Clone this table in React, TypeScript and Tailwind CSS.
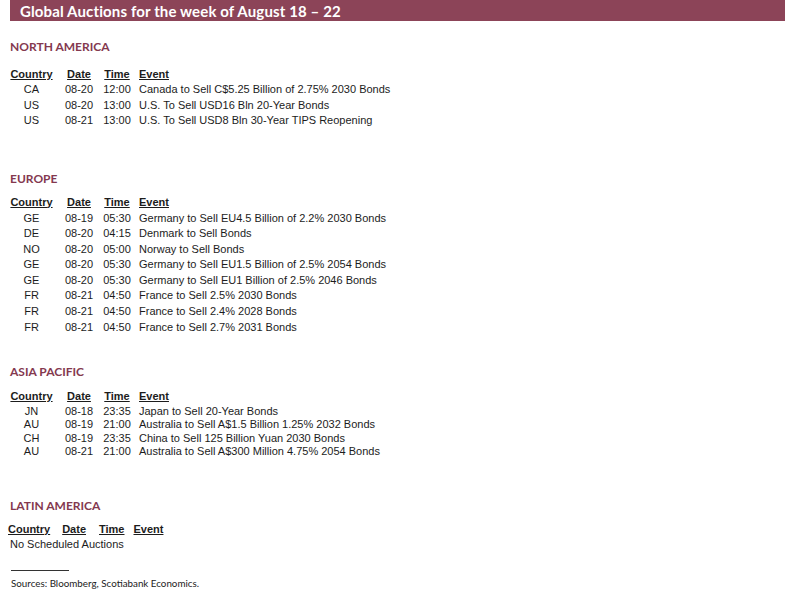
import React from "react";

type Row = [string, string, string, string];

interface Section {
  title: string;
  rows: Row[];
  mt: string;
  headerMt: string;
  rowsMt: string;
  leading: string;
}

const sections: Section[] = [
  {
    title: "NORTH AMERICA",
    mt: "mt-[18px]",
    headerMt: "mt-[11px]",
    rowsMt: "mt-0",
    leading: "leading-[15.5px]",
    rows: [
      ["CA", "08-20", "12:00", "Canada to Sell C$5.25 Billion of 2.75% 2030 Bonds"],
      ["US", "08-20", "13:00", "U.S. To Sell USD16 Bln 20-Year Bonds"],
      ["US", "08-21", "13:00", "U.S. To Sell USD8 Bln 30-Year TIPS Reopening"],
    ],
  },
  {
    title: "EUROPE",
    mt: "mt-[42px]",
    headerMt: "mt-[7px]",
    rowsMt: "mt-[1px]",
    leading: "leading-[15.6px]",
    rows: [
      ["GE", "08-19", "05:30", "Germany to Sell EU4.5 Billion of 2.2% 2030 Bonds"],
      ["DE", "08-20", "04:15", "Denmark to Sell Bonds"],
      ["NO", "08-20", "05:00", "Norway to Sell Bonds"],
      ["GE", "08-20", "05:30", "Germany to Sell EU1.5 Billion of 2.5% 2054 Bonds"],
      ["GE", "08-20", "05:30", "Germany to Sell EU1 Billion of 2.5% 2046 Bonds"],
      ["FR", "08-21", "04:50", "France to Sell 2.5% 2030 Bonds"],
      ["FR", "08-21", "04:50", "France to Sell 2.4% 2028 Bonds"],
      ["FR", "08-21", "04:50", "France to Sell 2.7% 2031 Bonds"],
    ],
  },
  {
    title: "ASIA PACIFIC",
    mt: "mt-[29px]",
    headerMt: "mt-[7.5px]",
    rowsMt: "mt-[1.3px]",
    leading: "leading-[13.3px]",
    rows: [
      ["JN", "08-18", "23:35", "Japan to Sell 20-Year Bonds"],
      ["AU", "08-19", "21:00", "Australia to Sell A$1.5 Billion 1.25% 2032 Bonds"],
      ["CH", "08-19", "23:35", "China to Sell 125 Billion Yuan 2030 Bonds"],
      ["AU", "08-21", "21:00", "Australia to Sell A$300 Million 4.75% 2054 Bonds"],
    ],
  },
];

const heading = "text-[12px] leading-[16px] font-bold text-[#84394f] font-['Lato',sans-serif]";
const table = "font-['Liberation_Sans',Arial,sans-serif] text-[11px] text-[#1c1c1c]";

function AuctionTable({ s }: { s: Section }) {
  return (
    <div className={s.mt}>
      <h2 className={`${heading} pl-[10px]`}>{s.title}</h2>
      <div className={`${table} ${s.headerMt} flex pl-[10px] font-bold underline leading-[16px] underline-offset-[1px]`}>
        <span className="w-[43px] text-center">Country</span>
        <span className="ml-[10px] w-[32px] text-center">Date</span>
        <span className="ml-[6px] w-[32px] text-center">Time</span>
        <span className="ml-[6px]">Event</span>
      </div>
      <div className={`${table} ${s.rowsMt} ${s.leading}`}>
        {s.rows.map((r, i) => (
          <div key={i} className="flex pl-[10px]">
            <span className="w-[43px] text-center">{r[0]}</span>
            <span className="ml-[10px] w-[32px] text-center">{r[1]}</span>
            <span className="ml-[6px] w-[32px] text-center">{r[2]}</span>
            <span className="ml-[6px] whitespace-nowrap">{r[3]}</span>
          </div>
        ))}
      </div>
    </div>
  );
}

export default function App() {
  return (
    <div className="w-[785px] h-[596px] bg-white overflow-hidden">
      <div className="ml-[10px] h-[21px] bg-[#8c4458] pl-[10px] pt-[2px]">
        <h1 className="text-[15px] leading-[19px] font-bold tracking-[0.13px] text-white font-['Lato',sans-serif]">
          Global Auctions for the week of August 18 – 22
        </h1>
      </div>

      {sections.map((s) => (
        <AuctionTable key={s.title} s={s} />
      ))}

      <div className="mt-[40px]">
        <h2 className={`${heading} pl-[10px]`}>LATIN AMERICA</h2>
        <div className={`${table} mt-[8px] flex pl-[8px] font-bold underline leading-[15px] underline-offset-[1px]`}>
          <span>Country</span>
          <span className="ml-[12px]">Date</span>
          <span className="ml-[13px]">Time</span>
          <span className="ml-[9px]">Event</span>
        </div>
        <div className={`${table} pl-[10px] leading-[14px]`}>No Scheduled Auctions</div>
      </div>

      <div className="ml-[11px] mt-[19px] w-[58px] border-t border-[#333]" />
      <p className="mt-[6px] pl-[11px] text-[9.8px] leading-[12px] text-[#222] font-['Lato',sans-serif]">
        Sources: Bloomberg, Scotiabank Economics.
      </p>
    </div>
  );
}
